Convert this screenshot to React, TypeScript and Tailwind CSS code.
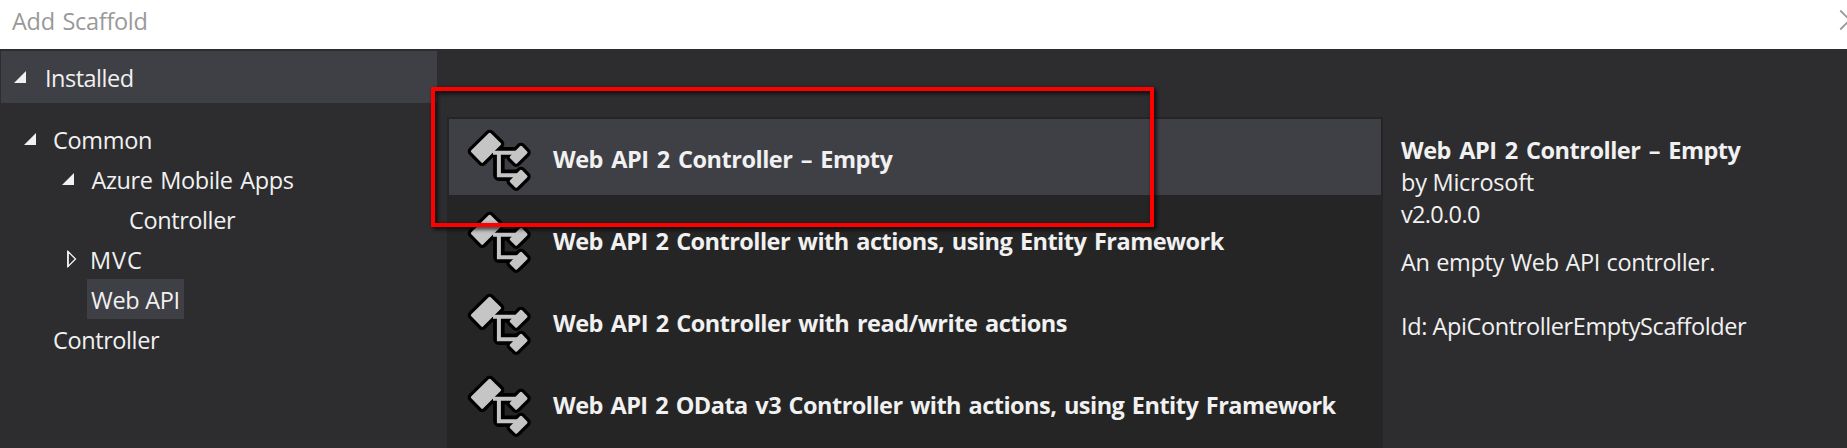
type TreeNode = {
  label: string;
  state?: 'open' | 'closed';
  arrow: string;
  text: string;
  selected?: boolean;
};

const tree: TreeNode[] = [
  { label: 'Common', state: 'open', arrow: 'w-[53px] pl-6', text: 'tracking-[-0.3px]' },
  { label: 'Azure Mobile Apps', state: 'open', arrow: 'w-[91.5px] pl-[62px]', text: 'tracking-[-0.4px] [word-spacing:2px]' },
  { label: 'Controller', arrow: 'w-[129px]', text: 'tracking-[-0.4px]' },
  { label: 'MVC', state: 'closed', arrow: 'w-[90px] pl-[66px]', text: 'tracking-[0.9px]' },
  { label: 'Web API', arrow: 'w-[87px]', text: 'tracking-[-0.3px]', selected: true },
  { label: 'Controller', arrow: 'w-[53px]', text: 'tracking-[-0.4px]' },
];

const templates = [
  { label: 'Web API 2 Controller – Empty', text: 'tracking-[-0.5px] [word-spacing:2.7px]', selected: true },
  { label: 'Web API 2 Controller with actions, using Entity Framework', text: 'tracking-[-0.54px] [word-spacing:2.2px]' },
  { label: 'Web API 2 Controller with read/write actions', text: 'tracking-[-0.5px] [word-spacing:2.1px]' },
  { label: 'Web API 2 OData v3 Controller with actions, using Entity Framework', text: 'tracking-[-0.53px] [word-spacing:2px]' },
];

function OpenArrow() {
  return (
    <svg width="12" height="12" viewBox="0 0 12 12" className="block">
      <path d="M12 0V12H0Z" fill="#f1f1f1" />
    </svg>
  );
}

function ClosedArrow() {
  return (
    <svg width="12" height="18" viewBox="0 0 12 18" className="block">
      <path d="M2 1.5V16.5L9.5 9Z" fill="none" stroke="#f1f1f1" strokeWidth="1.3" />
      <path d="M1.9 1V17" stroke="#f1f1f1" strokeWidth="1.6" />
    </svg>
  );
}

function ScaffoldIcon() {
  const shapes = (
    <>
      <path d="M22.7 6.4L32.6 16 15.2 33.3 5.4 23.3Z" />
      <path d="M54 19.4L59 24.5 49.2 34.2 44.2 29.3Z" />
      <path d="M54 43.4L59 48.5 49.2 58.2 44.2 53.3Z" />
    </>
  );
  const lines = 'M26 24.8H52M31.9 24.8V47.2H52';
  return (
    <svg width="64" height="64" viewBox="0 0 64 64" className="block shrink-0 blur-[0.4px]">
      <g fill="#000" stroke="#000" strokeWidth="9.5" strokeLinejoin="round">
        {shapes}
        <path d={lines} fill="none" strokeWidth="11.5" />
      </g>
      <g fill="#c5c5c5" stroke="#c5c5c5" strokeWidth="3" strokeLinejoin="round">
        {shapes}
        <path d={lines} fill="none" strokeWidth="4" strokeLinejoin="miter" />
      </g>
    </svg>
  );
}

export default function App() {
  return (
    <div className="relative flex h-[448px] w-[1847px] flex-col overflow-hidden bg-[#2d2d30] font-['Open_Sans','Noto_Sans',sans-serif] text-[23.5px] leading-8 whitespace-pre text-[#f1f1f1]">
      <header className="flex h-[49px] shrink-0 justify-between overflow-hidden bg-white pt-[5px] pl-3 text-[#999999]">
        <h1 className="tracking-[-0.3px] [word-spacing:2px]">Add Scaffold</h1>
        <svg width="8" height="32" viewBox="0 0 8 32" className="block">
          <path d="M1.3 5.5L20 24.5M1.3 24.5L20 5.5" stroke="#999" strokeWidth="1.8" />
        </svg>
      </header>

      <div className="flex min-h-0 flex-1 pt-0.5">
        <nav className="w-[447px] shrink-0">
          <div className="ml-px flex h-[52px] w-[436px] bg-[#3f3f46] pt-[11px]">
            <div className="w-8 shrink-0 pt-[9px] pl-[13px]">
              <OpenArrow />
            </div>
            <span className="pl-3 tracking-[-0.5px]">Installed</span>
          </div>
          <ul className="pt-4">
            {tree.map((n, i) => (
              <li key={i} className="flex h-10">
                <div className={`shrink-0 ${n.arrow} ${n.state === 'closed' ? 'pt-[11px]' : 'pt-3.5'}`}>
                  {n.state === 'open' && <OpenArrow />}
                  {n.state === 'closed' && <ClosedArrow />}
                </div>
                <span className={`pt-[5px] ${n.text} ${n.selected ? 'w-[97px] bg-[#3f3f46] pl-1' : ''}`}>{n.label}</span>
              </li>
            ))}
          </ul>
        </nav>

        <main className="mt-[66px] w-[936px] shrink-0 bg-[#252526] px-0.5 pt-0.5">
          <ul className="flex flex-col gap-1.5">
            {templates.map((t) => (
              <li key={t.label} className={`flex h-[76px] pt-[9px] pl-[18px] ${t.selected ? 'bg-[#3f3f46]' : ''}`}>
                <ScaffoldIcon />
                <span className={`pt-[15px] pl-[22px] font-bold ${t.text}`}>{t.label}</span>
              </li>
            ))}
          </ul>
        </main>

        <aside className="pt-[83px] pl-[18px]">
          <h2 className="font-bold tracking-[-0.5px] [word-spacing:2.7px]">Web API 2 Controller – Empty</h2>
          <p className="tracking-[-0.25px]">by Microsoft</p>
          <p className="tracking-[-0.67px]">v2.0.0.0</p>
          <p className="mt-4 tracking-[-0.4px] [word-spacing:1.1px]">An empty Web API controller.</p>
          <p className="mt-8 tracking-[-0.4px]">Id: ApiControllerEmptyScaffolder</p>
        </aside>
      </div>

      <div className="absolute top-[87px] left-[431px] h-[140px] w-[723px] border-4 border-[#ff0000] drop-shadow-[2px_2px_2px_rgba(0,0,0,0.9)]" />
    </div>
  );
}
